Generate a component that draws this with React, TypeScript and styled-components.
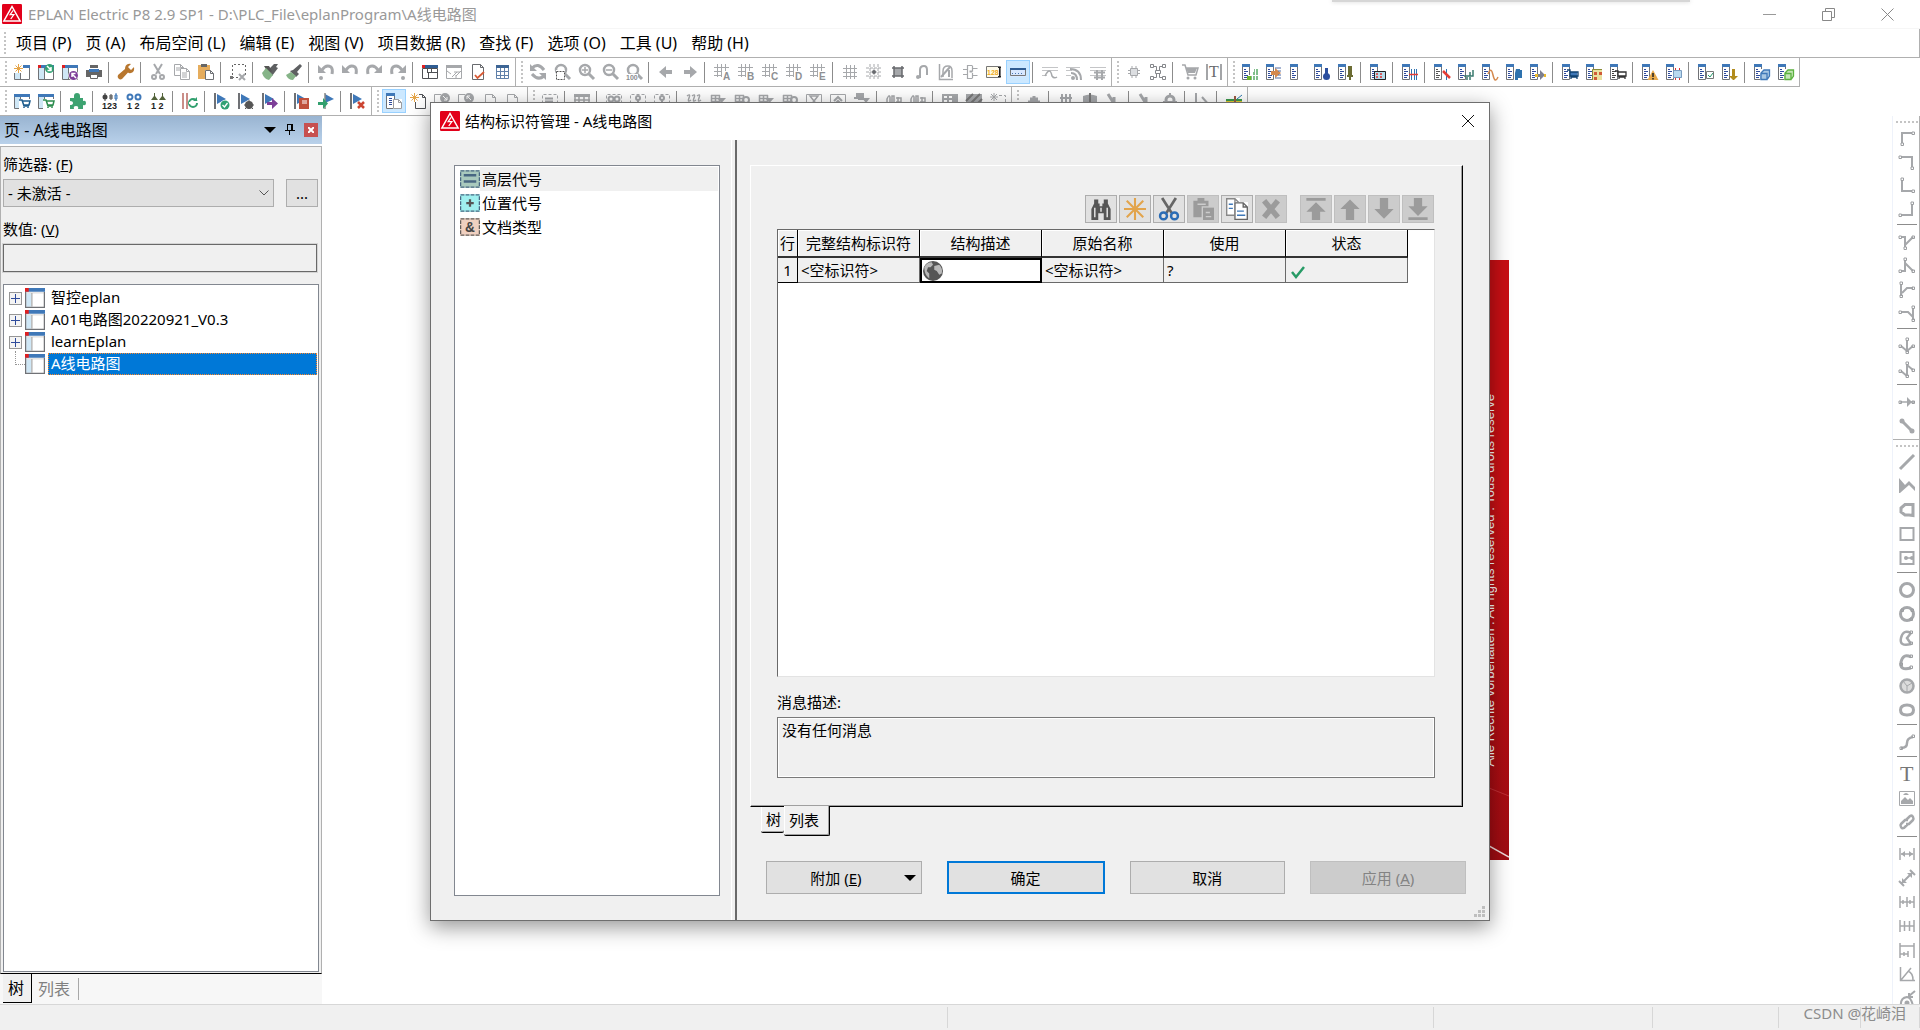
import React from "react";
import styled, { createGlobalStyle, css } from "styled-components";

/* ---------- icon drawing ---------- */

type Layer = { f?: string; s?: string; w?: number; dash?: string; d?: string; t?: string; x?: number; y?: number; z?: number; serif?: boolean };
const F = (f: string, d: string): Layer => ({ f, d });
const S = (s: string, d: string, w = 1, dash?: string): Layer => ({ s, d, w, dash });
const T = (t: string, f: string, x: number, y: number, z: number, serif = false): Layer => ({ t, f, x, y, z, serif });
const circle = (x: number, y: number, r: number) => `M${x - r} ${y}a${r} ${r} 0 1 0 ${2 * r} 0a${r} ${r} 0 1 0 ${-2 * r} 0z`;
const box = (x: number, y: number, w: number, h: number) => `M${x} ${y}h${w}v${h}h${-w}z`;

const G = "#a6a8ab";
const B = "#3f78b8";
const K = "#686a6e";
const N = "#2f4b9b";
const STAR = "#e5a548";

const win = [F("#fff", box(0, 1, 16, 15)), F("#cfe7f6", box(1, 4, 5, 11)), S("#707276", "M.5 4v11.5h15V4M6.5 4v11"), F(B, box(0, 1, 16, 3))];
const star = [F("#fff", box(0, 0, 9, 9)), S(STAR, "M4.5 0v9M0 4.5h9M1.5 1.5l6 6M7.5 1.5l-6 6")];
const page = (x: number, y: number, c: string, w = 9, h = 12) => [F("#fff", box(x, y, w, h)), S(c, `M${x + 0.5} ${y + 0.5}h${w - 4}l3 3v${h - 4}h${-(w - 1)}zM${x + w - 3.5} ${y + 0.5}v3h3`)];
const grid = [S(G, "M4.500 1v14M8.500 1v14M12.500 1v14M1 4.500h14M1 8.500h14M1 12.500h14")];
const snapGrid = (letter: string) => [S(G, "M3.500 0v13M7.500 0v13M11.500 0v8M0 3.500h15M0 7.500h15M0 11.500h8", 1), F("#fff", box(8, 7, 8, 9)), T(letter, "#8e9093", 9, 16, 10)];
const nav = (c = N) => [F("#fff", box(0, 0, 8, 16)), S("#707276", "M.5 3v12.500h7V3"), F(B, box(0, 0, 8, 3)), S(c, "M2 5.500h2M2 7.500h4M2 9.500h2M2 11.500h4M2 13.500h3")];
const flag = [S("#6f7175", "M1 0v16", 2), F(B, "M3 1l9 5-9 5z")];
const node = (...p: [number, number][]) => p.map(([x, y]) => S("#9c9ea1", box(x - 1, y - 1, 2.5, 2.5)));
const undo = (flip: boolean, dot: boolean) => [
  S(G, flip ? "M12 6Q8 0 3 3Q1 5 2 10" : "M4 6Q8 0 13 3Q15 5 14 10", 3),
  F(G, flip ? "M16 1v8H8z" : "M0 1v8h8z"),
  ...(dot ? [F(G, circle(flip ? 13 : 3, 14, 2))] : []),
];
const up = [F("#9b9b9b", "M8 1l7 7h-4v8H5V8H1z")];
const lens = [S(G, circle(7, 6, 5), 2.5), S(G, "M11 10l5 5", 3)];
const dashed = [S(G, "M.5 15.500V1.500h15v14", 1, "3 2")];

const icons: Record<string, Layer[]> = {
  "new project": [...win, ...star],
  "open project": [...win, F("#e02020", box(0, 1, 3, 3)), F("#31a073", circle(11.5, 4.5, 4.5)), S("#fff", "M9 2l4 4M13 3v3.500H9.500", 1.500)],
  "close project": [...win, F("#e02020", box(0, 1, 3, 3)), F("#fff", circle(11.500, 11.500, 5.200)), F("#7d3f98", circle(11.500, 11.500, 4.500)), S("#fff", "M14 14l-4-4M10 13v-3.500h3.500", 1.500)],
  print: [F("#666", box(4, 1, 8, 3)), F("#666", "M0 6h16v7H0z"), F(B, box(3, 5, 10, 3)), F("#fff", box(4, 11, 8, 3)), S("#666", "M4.500 10v4.500h7V10")],
  settings: [F("#b8772f", "M10 0q2-.5 3 0l-3 3 3 3 3-3q1 5-3 6-2 .5-3-.5L4 15q-2 1-3.500-.5T0 11l7-6q0-4 3-5z")],
  cut: [S(G, "M4 0l6 10M12 0L6 10", 2), S(G, circle(4, 13, 2), 2), S(G, circle(12, 13, 2), 2)],
  copy: [...page(0, 0, G, 10, 12), S(G, "M2 4h4M2 6h4"), ...page(6, 4, G, 10, 12), S(G, "M8 9h5M8 11h5M8 13h5")],
  paste: [F("#e6ad5d", box(0, 1, 12, 14)), F("#666", box(3, 0, 6, 3)), ...page(7, 6, "#6e7175", 9, 10)],
  "clear area": [S("#666", "M2.500 11V.5h13V11M2 13.500h6", 1, "2 2"), F("#777", box(0, 12, 3, 3)), S(G, "M9 10l6 6M15 10l-6 6", 2)],
  "copy format": [F("#5e6062", "M6 6L12 0l4 0-2 3 2 1-6 8z"), F("#555", "M2 2l5 0 3 5-3 3z"), F("#86b488", "M0 9l4-5 7 7-4 5q-5-1-7-7z")],
  "assign format": [F("#5e6062", "M7 6l7-6 2 2-5 6 2 2-3 3-6-6z"), F("#86b488", "M0 11l5-3 5 4-3 4q-5 0-7-5z")],
  undo: undo(false, true), "undo list": undo(false, false), redo: undo(true, false), "redo list": undo(true, true),
  "page navigator": [F("#fff", box(0, 1, 16, 14)), S("#4e5054", "M.5 4.500h15v10H.5zM6.500 4v11M6 8.500h10"), F("#2f5c92", box(0, 1, 16, 3)), F("#e02020", box(0, 1, 3, 3)), F("#4e5054", box(5, 4, 5, 5)), F("#fff", box(6, 5, 3, 3))],
  "graphic preview": [S(G, "M.5 4v10.500h15V4M1 7l4 3M6 13l5-5M15 7l-5 5M8 8h6M10 11v3"), F(G, box(0, 1, 16, 3))],
  "check page": [...page(2, 0, "#686a6e", 12, 16), S("#d85a35", "M5 11l2.500 3L14 8", 1.800)],
  "table view": [F("#fff", box(2, 1, 13, 15)), S("#5f80aa", "M2.500 4v10.500h12V4M6.500 4v11M10.500 4v11M2 7.500h13M2 11.500h13"), F("#3d6595", box(2, 1, 13, 3))],
  refresh: [S(G, "M14 6Q8-2 2 4M2 10q6 7 12 2", 3), F(G, "M0 0v7h7zM16 16V9H9z")],
  "zoom window": [...lens, F("#fff", box(2, 6, 9, 10)), S("#555", box(2.500, 7.500, 8, 8), 1, "2 1")],
  "zoom in": [...lens, S(G, "M4 6h6M7 3v6", 1.500)], "zoom out": [...lens, S(G, "M4 6h6", 1.500)],
  "zoom all": [...lens, F("#fff", box(0, 10, 12, 6)), T("100", "#8a8c8f", 0, 16, 7)],
  back: [F(G, "M1 8l7-6v4h6v4H8v4z")], forward: [F(G, "M15 8L8 2v4H2v4h6v4z")],
  "grid A": snapGrid("A"), "grid B": snapGrid("B"), "grid C": snapGrid("C"), "grid D": snapGrid("D"), "grid E": snapGrid("E"),
  "grid display": grid, "snap to grid": [S(G, "M4 0v16M8 0v16M12 0v16M0 4h16M0 8h16M0 12h16", 1, "3 1"), F(K, circle(8, 8, 2))],
  "align to grid": [F(G, box(4, 4, 8, 8)), S(K, "M4 2v12M12 2v12M2 4h12M2 12h12", 1.500)],
  "object snap": [S(G, "M4 13h2V6q0-4 4-4 3 0 3 4v5", 2), F(G, circle(4, 13, 2))],
  "design mode": [S(G, "M1.500 0v15.500H15M5 13V7q0-5 5-5 4 0 4 5v7", 1.500), S(G, "M3 13L12 3M11 13V6", 2)],
  "logic snap": [S(G, "M5.500 1.500h5M5.500 1v5M1 5.500h4.500M5.500 9v5.500h5M1 10.500h4.500M5.500 6v4M10.500 4.500h5M10.500 11.500h5M10.500 2v5h-3M10.500 9v5M7.500 8h3", 1.200)],
  "placeholder text": [F("#fffbea", box(0, 2, 15, 12)), S("#777", box(.5, 2.500, 14, 11)), T("128", "#efac1d", 1, 11, 7), S("#222", "M13.500 3v10M12 3.500h3M12 12.500h3")],
  ruler: [F("#d9e8ff", box(0, 5, 16, 8)), S("#777", box(.5, 5.500, 15, 6)), F("#2f5c92", box(0, 4, 16, 2)), S("#4b76b0", "M2 9.500h12", 1, "1 2")],
  "line wave": [S("#c4c5c7", "M0 3.500h16M0 6.500h16M0 11.500h5"), S(G, "M3 12q5-10 7 0 2 3 5 1", 1.500)],
  "line arc": [S("#c4c5c7", "M0 3.500h14M0 6.500h6M0 11.500h5"), S(G, "M4 5q11 0 11 11M5 9q6 0 6 7", 2), F(G, circle(7, 14, 2))],
  "line hatch": [S("#c4c5c7", "M0 3.500h16M0 6.500h16M0 11.500h16"), S(G, "M7 6v10M12 6v10M4 8.500h11M4 13.500h11", 2)],
  box: [F("#dcdee1", box(4, 5, 8, 6)), S(G, "M4.500 4.500h7v7h-7zM2 6.500h2M2 9.500h2M12 6.500h2M12 9.500h2M6 2v2M10 2v2M6 12v2M10 12v2")],
  structure: [S("#85878b", "M.5.5h3v3h-3zM12.500.5h3v3h-3zM.5 12.500h3v3h-3zM12.500 12.500h3v3h-3zM5.500 6.500h5v3h-5zM3.500 2.500h3v4M12.500 2.500h-3v4M3.500 13.500h3v-4M12.500 13.500h-3v-4")],
  cart: [S(G, "M0 1h3l3 10h8l2-7H4", 1.500), F(G, "M4 4h11l-2 5H6z"), F(G, circle(6, 14, 1.500)), F(G, circle(13, 14, 1.500))],
  "text marker": [S(K, "M1 0v16M15 0v16", 1.200), T("T", K, 3, 13, 16, true)],
  "nav terminals": [...nav(), F("#80bf8c", "M12 5h4v11H6v-5h4V8h2z"), S("#fff", "M6 11.500h10M10.500 8v8M13.500 5v11"), F("#6fb52e", box(5, 12, 4, 4))],
  "nav plugs": [...nav(), F("#d4894e", "M5 7h4V4l6 5-6 5v-3H5z"), S("#506da6", "M9 4h6M12 7h3M12 11h3M9 14h6")],
  "nav plain": nav(),
  "nav cable": [...nav(), F("#2c4f9e", circle(12.500, 12.500, 3.500)), F("#2c4f9e", box(11, 4, 3, 7))],
  "nav pen": [...nav(), F("#6b6c33", "M10 2h4v9h1v2h-2v3h-2v-3H9v-2h1z")],
  "nav plc": [...nav(), F("#b8dcea", box(5, 7, 11, 9)), S("#222", box(4.500, 7.500, 11, 8)), S("#d33", "M6 10h8M6 13h8", 1.500, "2 2")],
  "nav bus": [...nav(), S("#2e72b2", "M9.500 5v11M12.500 5v11M14.500 5v11"), S("#e43c36", "M7 10.500h9", 1.500)],
  "nav connection": [...nav("#555"), S("#2e72b2", "M12.500 5v11"), S("#e43c36", "M9 7l7 7", 2.500)],
  "nav wires": [...nav(), S("#39796e", "M6 12h9V6M12 8v4M9 13v3M12 13v3", 1.500)],
  "nav signal": [...nav(), S("#d4894e", "M6 10q3-8 5 1t5 2", 1.500)],
  "nav device": [...nav(), F("#2e72ae", "M10 5h4v1h2v8h-4v2H9V9z")],
  "nav arrow": [...nav(), F("#7d8090", "M7 10h3V6l5 5-5 5v-3H7z"), F("#e9b82e", box(5, 10, 3, 3)), F("#e9b82e", box(14, 10, 2, 3))],
  "nav blue cart": [...nav(), F("#3f78b8", box(8, 8, 7, 4)), S("#114271", "M5 6h3v6h8V8H8M9 15v-2h6v2", 1.300)],
  "nav cabinet": [...nav(), F("#e9e1a0", box(6, 5, 10, 11)), F("#d05b37", "M8 8h3v3H8zM13 8h3v3h-3zM8 13h3v3H8z"), S("#8a8a35", "M6.500 16V5.500H16")],
  "nav black cart": [...nav("#444"), F("#fff", box(8, 8, 8, 4)), S("#333", "M5 7h3v5h8V8H8M9 15v-2h6v2", 1.300)],
  "nav warning": [...nav(), F("#e8aa4c", "M11 6l5.500 10H5.500z"), S("#222", "M11 9v4M11 14v1.500", 1.500)],
  "nav chip": [...nav(), F("#b9d9ef", box(7, 7, 9, 7)), S("#7a9cc0", box(7.500, 6.500, 8, 7)), S("#d33", "M9.500 4v2M13.500 4v2M9.500 14v2M13.500 14v2")],
  "nav check": [...nav(), F("#fff", box(8, 7, 8, 9)), S("#777", box(8.500, 7.500, 7, 7)), S("#269a6b", "M10 11l2 2 3-4")],
  "nav anchor": [...nav(), F("#b28c1d", "M10 5h3v7h3l-4 4h-1l-4-4h3z")],
  "nav blue cube": [...nav(), F("#fff", box(6, 5, 10, 11)), F("#a9c8e4", "M6 10l4-4h6v6l-3 4H6z"), S("#3f78b8", "M7 9.500h6v6H7zM7 9l3-3h5.500v6l-2 3", 1.300)],
  "nav green cube": [...nav(), F("#fff", box(6, 5, 10, 11)), F("#c4e5b6", "M6 10l4-4h6v6l-3 4H6z"), S("#5bb13f", "M7 9.500h6v6H7zM7 9l3-3h5.500v6l-2 3", 1.300)],
  "device cart": [...win, F("#fff", box(5, 6, 11, 10)), S("#1e5d8e", "M5 7h3l2 6h5M8 8h8l-1 4H9M10 15v-1M14 15v-1", 1.500)],
  "part cart": [...win, F("#fff", box(5, 6, 11, 10)), S("#2d8c4e", "M5 7h3l2 6h5M8 8h8l-1 4H9M10 15v-1M14 15v-1", 1.500)],
  addon: [F("#3da371", "M0 5h4V3q0-3 3-3t3 3v2h3v3q3-1 3 2t-3 2v4H8q1-3-2-3t-2 3H0v-4q3 0 3-2t-3-2z")],
  "number devices": [F("#444", circle(3, 4, 2.500)), S("#444", "M3 0v8M7 3h4M7 5h4M9 1v6"), S(B, "M14 0v8M13 2h2v4h-2z"), T("123", "#222", 0, 16, 9)],
  "number cables": [S(B, circle(4, 4, 2.500), 2), S(B, circle(12, 4, 2.500), 2), T("1 2", "#222", 1, 16, 9)],
  "number terminals": [F("#53633a", "M4 0h1v3l3 4H1l3-4zM12 0h1v3l3 4H9l3-4z"), T("1 2", "#222", 1, 16, 9)],
  "update connections": [S("#b96a62", "M1 0v16M5 0v16", 1.500), S("#32a06f", circle(11, 10, 4), 2), F("#fff", box(7, 9, 3, 2)), F("#fff", box(12, 8, 4, 2)), F("#32a06f", "M15 4v4h-4z")],
  "run check": [...flag, F("#fff", circle(11, 12, 5)), F("#31a073", circle(11, 12, 4.500)), S("#fff", "M8.500 12l2 2 3-4", 1.300)],
  "check settings": [...flag, F("#555", circle(11, 12, 4)), S("#555", "M11 7v9M6 12h10M8 9l7 7M14 9l-7 7")],
  "check next": [...flag, F("#7d3f98", "M5 9h5V5l6 5.500-6 5.500v-4H5z")],
  "message book": [...flag, F("#c0503c", box(5, 5, 10, 11)), S("#fff", "M8 8h5M8 10h5")],
  "message go": [F(B, "M7 1l9 5-9 4z"), S("#888", "M7 0v16", 1.500), F("#32a06f", "M0 9h5V5l5 5.500L5 16v-4H0z")],
  "delete messages": [...flag, S("#cc4531", "M8 9l6 6M14 9l-6 6", 2.500)],
  "page list": [F("#fff", box(0, 0, 9, 16)), S("#707276", "M.5 3v12.500h8V3"), F(B, box(0, 0, 9, 3)), S(N, "M3 5.500h3M3 7.500h3M3 9.500h3M3 11.500h3", 1), ...page(7, 6, "#9a9ca0", 9, 10)],
  "new page": [...page(5, 1, "#505256", 11, 15), ...star],
  "page down": [S(G, "M.5 16V1.500H7"), F(G, circle(11, 5, 5)), S("#fff", "M9 3l4 4M13 4v3h-3")],
  "page up": [S(G, "M.5 16V1.500H7"), F(G, circle(11, 5, 5)), S("#fff", "M13 7L9 3M9 6V3h3")],
  "page copy": page(3, 1, G, 11, 14), "page move": page(1, 1, G, 11, 14),
  "dash list": [...dashed, S(G, "M3 5.500h8M3 8.500h8", 2)], "dash table": [F(G, box(0, 1, 16, 3)), S(G, "M1 2v12M5 2v12M10 2v12M15 2v12M0 7h16M0 11h16", 1.500)],
  "dash circles": [...dashed, S(G, circle(5, 6, 2.500), 2), S(G, circle(11, 6, 2.500), 2)],
  "dash person": [...dashed, S(G, circle(8, 5, 2), 2), S(G, "M8 7v3l-4 5M8 10l4 5", 2)],
  waves: [S(G, "M1 3q4-3 2 2t2 2M6 3q4-3 2 2t2 2M11 3q4-3 2 2t2 2", 1.500)],
  "table filter": [S(G, "M1 2.500h9M1 5.500h9M1 8.500h9M1.500 2v8M5.500 2v8M9.500 2v8", 1.500), F(G, "M7 5h9l-4.500 5z")],
  "table circle": [S(G, "M1 2.500h9M1 5.500h9M1 8.500h9M1.500 2v8M5.500 2v8M9.500 2v8", 1.500), S(G, circle(12, 7, 3), 2)],
  hourglass: [S(G, box(.5, 1.500, 15, 14)), S(G, "M4 3h8L4 13h8z", 1.500)],
  "box up": [S(G, box(.5, 1.500, 15, 14)), S(G, "M4 8l4-4 4 4M4 12l4-4 4 4", 2)],
  "signal filter": [S(G, "M0 5h3V1h2v5h2V1h2v5h4", 2), F(G, "M8 5h8l-4 5z")],
  hand: [S(G, "M1 16V6q2-5 3-2v12M6 16V3h2v13M12 4v12M10 5h5v4h-5", 1.500)],
  bars: [F(G, box(0, 1, 16, 10)), F("#fff", "M2 3h3v2H2zM7 3h3v2H7zM2 7h3v2H2zM7 7h3v2H7z")],
  hatched: [F(G, box(0, 1, 16, 14)), S("#777", "M0 8l7-7M0 15L14 1M7 15l9-9", 2)],
  "star dash": [S(G, "M4 0v8M0 4h8M1 1l6 6M7 1L1 7"), S(G, "M9 2.500h6.500V16", 1, "3 2")],
  bell: [S(G, "M8 3v6M4 6h8M2 9h12", 3)],
  pipes: [S(G, "M4 1v15M8 1v15M12 1v15M2 5h12", 2)],
  cylinder: [F(G, "M1 3q7-3 14 0v6q-7 3-14 0z"), S("#777", "M8 0v12", 2)],
  slash: [S(G, "M2 1l5 8M8 4v10", 3)], gear: [S(G, circle(8, 7, 4), 3), S(G, "M8 0v4M1 9h14", 2)],
  cursor: [S(G, "M2 0v14l4-4 5 6M8 4l7 8", 2)],
  rainbow: [F("#3d9b4d", box(0, 6, 16, 2)), F("#e7ce31", box(0, 8, 16, 2)), F("#b3492d", box(0, 10, 16, 2)), S("#9c5c44", "M9 3v10", 2), S("#2c7bb1", "M11 6l5-4")],

  "corner rd": [S(G, "M3 13V3H13", 2), ...node([14, 3], [3, 14])],
  "corner ld": [S(G, "M3 3h10V13", 2), ...node([1, 3], [13, 14])],
  "corner ru": [S(G, "M3 2v11H13", 2), ...node([3, 1], [14, 13])],
  "corner lu": [S(G, "M13 2v11H3", 2), ...node([13, 1], [1, 13])],
  "t right": [S(G, "M2 3h4V13M6 11l8-8", 2), ...node([1, 3], [14, 3], [6, 14])],
  "t left": [S(G, "M6 2v11H2M6 5l8 8", 2), ...node([6, 1], [1, 13], [14, 13])],
  "t down": [S(G, "M2 2v12M3 11l5-5h6", 2), ...node([2, 1], [2, 14], [14, 6])],
  "t up": [S(G, "M14 2v12M14 11L9 6H2", 2), ...node([14, 1], [14, 14], [1, 6])],
  "cross down": [S(G, "M8 2v12M2 8l6 5 6-5", 2), ...node([8, 1], [1, 8], [14, 8], [8, 14])],
  "cross up": [S(G, "M8 2v12M2 9l6 5M8 3l6 5", 2), ...node([8, 1], [1, 9], [14, 8], [8, 14])],
  jumper: [S(G, "M1 8h14", 1.500), F(G, "M8 3l5 5-5 5z"), ...node([1, 8], [14, 8])],
  "break point": [S(G, "M3 3l10 10", 3), F(G, circle(3, 3, 2.500)), F(G, circle(13, 13, 2.500))],
  line: [S(G, "M1 15L15 1", 3)],
  polyline: [F(G, "M0 0l6 7 4-4 6 6v4l-6-6-9 8H0z")],
  polygon: [S(G, "M14 2.500v11L10 13H6L2 10V6l4-3.500h4z", 3)],
  rectangle: [S(G, box(1.500, 2, 13, 12), 2)],
  "rectangle centre": [S(G, box(1.500, 2, 13, 12), 2), S(G, "M7 8h6", 1.500), F(G, circle(7, 8, 2)), F(G, circle(13, 8, 2))],
  "circle": [S(G, circle(8, 8, 6.500), 3)],
  "circle points": [S(G, circle(8, 8, 6.500), 3), ...node([3, 4], [13, 4], [12, 13])],
  "arc centre": [S(G, "M12 3Q4-1 2 8t10 6M12 3L8 8l4 6", 2.500), ...node([12, 2], [12, 13])],
  "arc points": [S(G, "M12 3Q4-1 2 8t10 6", 3), ...node([12, 2], [2, 10], [12, 13])],
  sector: [F("#dcdcdc", circle(8, 8, 7)), S(G, circle(8, 8, 6.500), 2.500), S(G, "M8 8L4 3M8 8v6M8 8l5-3")],
  ellipse: [S(G, "M1.500 8q0-5 6.500-5t6.500 5-6.500 5-6.500-5z", 3)],
  spline: [S(G, "M2 14q6 0 6-5t6-6", 2.500), ...node([2, 14], [14, 2])],
  text: [T("T", "#777", 1, 15, 22, true)],
  picture: [S(G, box(.5, 1.500, 15, 14)), F(G, "M2 14v-3l4-4 3 3 2-2 3 3v3zM4 5q3-4 6 0z")],
  hyperlink: [S(G, "M7 6l4-4q2-1 3 1t0 3l-4 4H7M9 10l-4 4q-2 1-3-1t0-3l4-4h3", 2.500)],
  "dim linear": [S(G, "M1 2v12M15 2v12M2 8h12", 1.500), F(G, "M2 8l4-3v6zM14 8l-4-3v6z")],
  "dim aligned": [S(G, "M3 13L13 3M0 11l5 5M11 0l5 5", 2), F(G, "M3 13V8l5 5zM13 3v5L8 3z")],
  "dim chain": [S(G, "M1 2v12M8 3v10M15 2v12M1 8h14M4 6v4M11 6v4", 1.500)],
  "dim base": [S(G, "M1 2v12M5.500 3v10M10.500 3v10M15 2v12M1 8h14", 1.500)],
  "dim step": [S(G, "M1 1v15M15 1v15M1 4h14M1 12h8M9 9v6M5 10v4", 1.500)],
  "dim angle": [S(G, "M1.500 1v13.500H16M2 14L12 2M9 5q5 2 5 9", 1.500)],
  "dim radius": [S(G, "M2 16q-1-8 6-9 4 0 6 9M16 1l-6 5M10 3v4h4", 2), F(G, circle(8, 13, 2.500))],

  find: [F("#555", "M3 1h3v3h1v2h2V4h1V1h3v3l2 4v8h-5v-5H6v5H1V8l2-4z"), S("#eee", "M3.500 7v7M12.500 7v7M8 7v3")],
  create: [S("#e2a44c", "M8 0v16M0 8h16M2 2l12 12M14 2L2 14", 1.500)],
  "cut entry": [S("#666", "M3 0l7 11M13 0L6 11", 2), S("#2a6cb5", circle(4, 13, 2.500), 1.800), S("#2a6cb5", circle(12, 13, 2.500), 1.800)],
  "paste entry": [F("#9b9b9b", "M1 2h3V0h5v2h3v4H7v8H1z"), F("#9b9b9b", box(8, 7, 8, 9)), F("#ccc", "M4 4h6v1H4zM10 10h3v1h-3zM10 13h4v1h-4z")],
  "copy entry": [...page(0, 0, "#888", 10, 13), S(B, "M2 4.500h3M2 7.500h3"), ...page(6, 3, "#666", 10, 13), S(B, "M8 9.500h5M8 12.500h6")],
  "delete entry": [S("#9b9b9b", "M3 2l10 12M13 2L3 14", 4)],
  "move to top": [F("#9b9b9b", "M1 0h14v2H1zM8 3l7 7h-4v6H5v-6H1z")],
  "move up": up,
  "move down": [F("#9b9b9b", "M8 15L1 8h4V0h6v8h4z")],
  "move to bottom": [F("#9b9b9b", "M1 14h14v2H1zM8 13L1 6h4V0h6v6h4z")],

  project: [F("#fff", box(0, 0, 16, 16)), F("#cfe7f6", box(1, 4, 4, 11)), F("#e4e4e4", box(1, 3, 14, 1.500)), S("#707276", "M.5 3v12.500h15V3"), S("#aaa", "M5.500 4v11"), F(B, box(0, 0, 16, 3)), F("#e02020", box(0, 0, 3, 3))],
  plant: [F("#a9c9bd", box(0, 1, 16, 14)), S("#496782", box(.5, 1.500, 15, 13), 1, "3 1"), F("#496782", "M3 4h10v2H3zM3 9h10v2H3z")],
  location: [F("#9ff0ef", box(0, 1, 16, 14)), S("#496782", box(.5, 1.500, 15, 13), 1, "3 1"), S("#555", "M5 8h6M8 5v6", 1.800)],
  document: [F("#f0d0c0", box(0, 1, 16, 14)), S("#625d5a", box(.5, 1.500, 15, 13), 1, "3 1"), T("&", "#444", 4, 12, 11)],
  logo: [F("#e2001a", "M1 0h14q1 0 1 1v14q0 1-1 1H1q-1 0-1-1V1q0-1 1-1z"), S("#fff", "M8 2L1.500 13.500h13z", 1.200), S("#fff", "M9 5L6.500 8.500h3L7 12", 1)],
  globe: [F("#555", circle(8, 8, 8)), F("#b8b8b8", "M1 5q2-4 6-4l1 2-2 2H4L3 8l2 2v4Q1 11 1 5zM9 4l4-1q3 3 2 7l-2 1-2-3-2-1z")],
  ok: [S("#279b66", "M1 8l4 5 8-10", 2.500)],
};

const Svg = styled.svg<{ $size: number }>`
  display: block;
  flex: none;
  width: ${(p) => p.$size}px;
  height: ${(p) => p.$size}px;
  overflow: visible;
`;

function Icon({ name, size = 16 }: { name: string; size?: number }) {
  return (
    <Svg viewBox="0 0 16 16" $size={size} aria-hidden="true">
      {(icons[name] ?? []).map((l, i) =>
        l.t ? (
          <text key={i} x={l.x} y={l.y} fontSize={l.z} fill={l.f} fontWeight={l.serif ? 400 : 700} fontFamily={l.serif ? '"Liberation Serif", serif' : '"Liberation Sans", sans-serif'}>{l.t}</text>
        ) : (
          <path key={i} d={l.d} fill={l.f ?? "none"} stroke={l.s} strokeWidth={l.w} strokeDasharray={l.dash} />
        ),
      )}
    </Svg>
  );
}

/* ---------- content ---------- */

const menus = ["项目 (P)", "页 (A)", "布局空间 (L)", "编辑 (E)", "视图 (V)", "项目数据 (R)", "查找 (F)", "选项 (O)", "工具 (U)", "帮助 (H)"];

const upperBars = [
  "new project,open project,close project,print,|,settings,|,cut,copy,paste,|,clear area,|,copy format,assign format,|,undo,undo list,redo,redo list,|,page navigator,graphic preview,check page,table view",
  "refresh,zoom window,zoom in,zoom out,zoom all,|,back,forward,|,grid A,grid B,grid C,grid D,grid E,|,grid display,snap to grid,align to grid,object snap,design mode,logic snap,placeholder text,ruler*,|,line wave,line arc,line hatch",
  "box,structure,|,cart,text marker",
  "nav terminals,nav plugs,nav plain,nav cable,nav pen,|,nav plc,|,nav bus,|,nav connection,nav wires,nav signal,nav device,nav arrow,|,nav blue cart,nav cabinet,nav black cart,|,nav warning,nav chip,|,nav check,nav anchor,|,nav blue cube,nav green cube",
];
const lowerBars = [
  "device cart,part cart,|,addon,|,number devices,number cables,number terminals,|,update connections,|,run check,check settings,check next,|,message book,message go,|,delete messages",
  "page list*,new page,page down,page up,page copy,page move",
  "dash list,|,dash table,|,dash circles,dash person,dash person,|,waves,table filter,table circle,table filter,table circle,hourglass,box up,signal filter,|,hand,hand,|,bars,hatched,star dash",
  "bell,|,pipes,cylinder,slash,|,slash,gear,|,cursor,|,rainbow",
];
const sideBars = [
  "corner rd,corner ld,corner ru,corner lu,|,t right,t left,t down,t up,|,cross down,cross up,|,jumper,break point",
  "line,polyline,polygon,rectangle,rectangle centre,|,circle,circle points,arc centre,arc points,sector,ellipse,|,spline,|,text,picture,hyperlink,|,dim linear,dim aligned,dim chain,dim base,dim step,dim angle,dim radius",
];
const projects = [
  { name: "智控eplan" },
  { name: "A01电路图20220921_V0.3" },
  { name: "learnEplan" },
  { name: "A线电路图", selected: true },
];
const identifiers = [
  { icon: "plant", name: "高层代号", selected: true },
  { icon: "location", name: "位置代号" },
  { icon: "document", name: "文档类型" },
];
const entryTools = [
  [["find"], ["create"], ["cut entry"], ["paste entry", "off"], ["copy entry"], ["delete entry", "off"]],
  [["move to top", "off"], ["move up", "off"], ["move down", "off"], ["move to bottom", "off"]],
];

/* ---------- styles ---------- */

const Global = createGlobalStyle`
  * { box-sizing: border-box; }
  body { margin: 0; background: #fff; }
  body, button, input, select, textarea {
    font-family: "Noto Sans", "Noto Sans CJK SC", sans-serif;
    font-size: 15px;
    color: #000;
  }
  button { padding: 0; }
`;

const Window = styled.div`
  position: relative;
  display: flex;
  flex-direction: column;
  height: 100vh;
  overflow: hidden;
  line-height: 20px;
`;

const TitleBar = styled.header`
  display: flex;
  align-items: center;
  flex: none;
  height: 29px;
  padding: 0 26px 0 2px;
  gap: 6px;
  color: #999;
  border-bottom: 1px solid #f6f6f6;
`;
const TitleText = styled.h1`
  flex: 1;
  margin: 0;
  font-size: 15px;
  font-weight: 400;
`;
const WindowButtons = styled.div`
  display: flex;
  gap: 46px;
`;
const PlainButton = styled.button`
  display: flex;
  border: 0;
  background: none;
`;
const PeekingWindow = styled.div`
  position: absolute;
  top: 0;
  right: 230px;
  width: 358px;
  height: 2px;
  background: #d6d6d6;
  box-shadow: 0 0 4px #ccc;
`;

const MenuBar = styled.nav`
  display: flex;
  align-items: center;
  flex: none;
  height: 29px;
  padding-left: 4px;
  border-right: 1px solid #b0b0b0;
  border-bottom: 1px solid #b0b0b0;
`;
const Grip = styled.span<{ $vertical?: boolean }>`
  flex: none;
  ${(p) =>
    p.$vertical
      ? css`
          width: 22px;
          height: 2px;
          margin: 5px 0 3px;
          background: repeating-linear-gradient(90deg, #c4c4c4 0 2px, transparent 2px 4px);
        `
      : css`
          width: 2px;
          height: 22px;
          margin: 0 3px 0 5px;
          background: repeating-linear-gradient(#c4c4c4 0 2px, transparent 2px 4px);
        `}
`;
const MenuGrip = styled(Grip)`
  margin: 0 3px 0 0;
`;
const MenuItem = styled.button`
  height: 28px;
  padding: 0 7px 2px;
  border: 0;
  background: none;
  font-size: 16px;
  white-space: nowrap;
`;

const BarRow = styled.div`
  display: flex;
  flex: none;
  height: 29px;
`;
const Bar = styled.div<{ $vertical?: boolean }>`
  display: flex;
  align-items: center;
  flex: none;
  border: 0 solid #b0b0b0;
  ${(p) =>
    p.$vertical
      ? css`
          flex-direction: column;
          width: 27px;
          padding-bottom: 1px;
          border-bottom-width: 1px;
        `
      : css`
          height: 29px;
          padding-right: 1px;
          border-right-width: 1px;
          border-bottom-width: 1px;
        `}
`;
const BarButton = styled.button<{ $active?: boolean }>`
  display: flex;
  align-items: center;
  justify-content: center;
  flex: none;
  width: 24px;
  height: 24px;
  border: 1px solid ${(p) => (p.$active ? "#99d1ff" : "transparent")};
  background: ${(p) => (p.$active ? "#cce8ff" : "none")};
`;
const BarRule = styled.span<{ $vertical?: boolean }>`
  flex: none;
  background: #8c8c8c;
  ${(p) =>
    p.$vertical
      ? css`
          width: 20px;
          height: 1px;
          margin: 2px 0 5px;
        `
      : css`
          width: 1px;
          height: 21px;
          margin: 0 5px 0 2px;
        `}
`;

const Workspace = styled.div`
  display: flex;
  flex: 1;
  min-height: 0;
`;
const Panel = styled.aside`
  display: flex;
  flex-direction: column;
  flex: none;
  width: 322px;
  background: #f7f7f7;
`;
const PanelHeader = styled.div`
  display: flex;
  align-items: center;
  flex: none;
  height: 30px;
  padding: 0 4px;
  gap: 9px;
  border-bottom: 2px solid #fff;
  background: linear-gradient(#99b4d1, #b9d1ea);
`;
const PanelTitle = styled.h2`
  flex: 1;
  margin: 0;
  font-size: 16px;
  font-weight: 400;
`;
const PanelClose = styled.button`
  display: flex;
  align-items: center;
  justify-content: center;
  width: 14px;
  height: 14px;
  border: 0;
  background: #c75050;
`;
const PanelBody = styled.div`
  display: flex;
  flex-direction: column;
  flex: 1;
  min-height: 0;
  padding: 7px 2px 1px;
  border: 1px solid #b0b0b0;
  border-bottom-color: #000;
  background: #f0f0f0;
`;
const FieldLabel = styled.label`
  display: block;
  height: 20px;
`;
const FilterRow = styled.div`
  display: flex;
  gap: 12px;
  margin: 5px 0 12px;
`;
const SelectWrap = styled.div`
  position: relative;
  flex: 1;
  svg {
    position: absolute;
    right: 5px;
    top: 10px;
    pointer-events: none;
  }
`;
const Select = styled.select`
  width: 100%;
  height: 28px;
  padding: 0 4px;
  border: 1px solid #adadad;
  border-radius: 0;
  background: #e1e1e1;
  appearance: none;
`;
const MoreButton = styled.button`
  width: 32px;
  height: 28px;
  margin-right: 1px;
  border: 1px solid #adadad;
  background: #e1e1e1;
`;
const ValueInput = styled.input`
  width: 314px;
  height: 28px;
  margin: 5px 0 12px;
  border: 1px solid #696969;
  background: #f0f0f0;
  outline: 1px solid #d4d4d4;
`;
const Tree = styled.ul`
  flex: 1;
  margin: 0;
  padding: 2px 1px;
  border: 1px solid #828790;
  background: #fff;
  list-style: none;
`;
const TreeRow = styled.li`
  display: flex;
  align-items: center;
  height: 22px;
  padding-left: 4px;
`;
const Expander = styled.span<{ $leaf?: boolean }>`
  flex: none;
  width: 13px;
  height: 13px;
  margin-right: 3px;
  border: 1px solid #969696;
  background: linear-gradient(#2f4b9b, #2f4b9b) center / 9px 1px no-repeat, linear-gradient(#2f4b9b, #2f4b9b) center / 1px 9px no-repeat, #f4f4f4;
  ${(p) =>
    p.$leaf &&
    css`
      height: 14px;
      width: 10px;
      margin: -12px 0 0 6px;
      border-width: 0 0 1px 1px;
      border-style: dotted;
      background: none;
    `}
`;
const TreeName = styled.span<{ $selected?: boolean }>`
  flex: 1;
  height: 22px;
  margin-left: 3px;
  padding-left: 2px;
  border: 1px dotted ${(p) => (p.$selected ? "#ff8728" : "transparent")};
  background: ${(p) => (p.$selected ? "#0078d7" : "none")};
  color: ${(p) => (p.$selected ? "#fff" : "#000")};
  line-height: 18px;
`;
const PanelTabs = styled.div`
  display: flex;
  flex: none;
  height: 30px;
  padding-left: 3px;
`;
const PanelTab = styled.button<{ $active?: boolean }>`
  height: 29px;
  padding: ${(p) => (p.$active ? "0 7px 2px 5px" : "0 8px 2px 6px")};
  border: 0 solid #000;
  border-width: ${(p) => (p.$active ? "0 1px 1px 0" : "0")};
  background: ${(p) => (p.$active ? "#f0f0f0" : "none")};
  color: ${(p) => (p.$active ? "#000" : "#808080")};
  font-size: 16px;
`;
const TabDivider = styled.span`
  width: 1px;
  height: 22px;
  margin-top: 4px;
  background: #a8a8a8;
`;

const Canvas = styled.main`
  display: flex;
  align-items: center;
  justify-content: center;
  flex: 1;
  min-width: 0;
`;
const Splash = styled.div`
  display: flex;
  align-items: flex-end;
  justify-content: flex-end;
  width: 804px;
  height: 600px;
  overflow: hidden;
  background: linear-gradient(to top, #a00c12, #c80f14 60%);
`;
const Copyright = styled.p`
  margin: 0 10px 93px 0;
  color: #fff;
  font: 13px/18px "Liberation Sans", sans-serif;
  writing-mode: vertical-rl;
  rotate: 180deg;
  white-space: nowrap;
`;
const Streak = styled.svg`
  display: block;
  width: 20px;
  height: 80px;
  margin-left: -20px;
`;
const SideRail = styled.div`
  flex: none;
  width: 28px;
  overflow: hidden;
  border-left: 1px solid #eef2fa;
  border-right: 1px solid #b0b0b0;
`;

const StatusBar = styled.footer`
  display: grid;
  grid-template-columns: 1fr 486px 219px 126px 82px 59px;
  flex: none;
  height: 26px;
  border-top: 1px solid #d7d7d7;
  background: #f0f0f0;
`;
const StatusCell = styled.span`
  margin: 2px 0;
  border-right: 1px solid #d7d7d7;
`;
const Watermark = styled.span`
  position: absolute;
  right: 14px;
  bottom: 7px;
  color: #8c8c8c;
`;

const Overlay = styled.div`
  position: absolute;
  inset: 0;
  display: flex;
  align-items: center;
  justify-content: center;
  padding-bottom: 7px;
`;
const Dialog = styled.section`
  display: flex;
  flex-direction: column;
  width: 1060px;
  height: 819px;
  border: 1px solid #6e6e6e;
  background: #f0f0f0;
  box-shadow: 0 6px 20px rgba(0, 0, 0, 0.42);
`;
const DialogTitle = styled.header`
  display: flex;
  align-items: center;
  flex: none;
  height: 37px;
  padding: 0 14px 1px 9px;
  gap: 5px;
  background: #fff;
`;
const DialogBody = styled.div`
  display: flex;
  flex: 1;
  min-height: 0;
`;
const IdentifierPane = styled.div`
  display: flex;
  flex: none;
  width: 306px;
  padding: 25px 11px 24px 23px;
  border-right: 2px solid #696969;
  box-shadow: inset -3px 0 #f0f0f0, inset -4px 0 #fff;
`;
const IdentifierList = styled.ul`
  flex: 1;
  margin: 0 4px 0 0;
  padding: 1px;
  border: 1px solid #828790;
  background: #fff;
  list-style: none;
`;
const Identifier = styled.li`
  display: flex;
  align-items: center;
  height: 24px;
  padding-left: 4px;
`;
const IdentifierName = styled.span<{ $selected?: boolean }>`
  flex: 1;
  padding: 2px;
  background: ${(p) => (p.$selected ? "#f0f0f0" : "none")};
`;
const ListPane = styled.div`
  display: flex;
  flex-direction: column;
  flex: 1;
  min-width: 0;
  padding: 25px 23px 7px 13px;
`;
const TabPage = styled.div`
  display: flex;
  flex-direction: column;
  flex: 1;
  min-height: 0;
  margin-right: 3px;
  padding: 29px 27px 28px 26px;
  border: 1px solid #fff;
  border-right-color: #000;
  border-bottom-color: #000;
  box-shadow: inset -1px -1px #a0a0a0;
`;
const EntryTools = styled.div`
  display: flex;
  justify-content: flex-end;
  gap: 13px;
  margin: 0 1px 6px 0;
`;
const EntryGroup = styled.div`
  display: flex;
  gap: 2px;
`;
const EntryButton = styled.button`
  display: flex;
  align-items: center;
  justify-content: center;
  width: 32px;
  height: 28px;
  border: 1px solid #adadad;
  background: #e1e1e1;
  &:disabled {
    border-color: #bfbfbf;
    background: #ccc;
  }
`;
const Sheet = styled.div`
  flex: 1;
  min-height: 0;
  border: 1px solid #696969;
  border-right-color: #e3e3e3;
  border-bottom-color: #e3e3e3;
  background: #fff;
`;
const Table = styled.table`
  table-layout: fixed;
  width: 630px;
  border-collapse: separate;
  border-spacing: 0;
`;
const HeadCell = styled.th<{ $width?: number }>`
  width: ${(p) => p.$width ?? 122}px;
  height: 28px;
  padding: 0;
  border-right: 1px solid #000;
  border-bottom: 2px solid #333;
  background: #f0f0f0;
  font-weight: 400;
  box-shadow: inset 1px 1px #fff;
`;
const Cell = styled.td<{ $editing?: boolean; $head?: boolean }>`
  height: 25px;
  padding: 0 3px;
  border: solid #696969;
  border-width: 0 1px 1px 0;
  background: #f0f0f0;
  ${(p) =>
    p.$editing &&
    css`
      padding: 0 1px;
      border: 2px solid #000;
      background: #fff;
    `}
  ${(p) =>
    p.$head &&
    css`
      border-color: #000;
      text-align: center;
    `}
`;
const StateCell = styled(Cell)`
  padding: 4px 0 0 5px;
`;
const MessageLabel = styled.label`
  display: block;
  height: 20px;
  margin: 15px 0 5px;
`;
const Message = styled.textarea`
  display: block;
  flex: none;
  width: 100%;
  height: 61px;
  padding: 2px 4px;
  border: 1px solid #7a7a7a;
  background: #f0f0f0;
  box-shadow: inset -1px -1px #fff, inset 1px 1px #fff;
  line-height: 20px;
  resize: none;
`;
const PageTabs = styled.div`
  display: flex;
  align-items: flex-start;
  height: 28px;
  padding-left: 11px;
`;
const PageTab = styled.button<{ $active?: boolean }>`
  height: ${(p) => (p.$active ? 30 : 26)}px;
  margin-top: ${(p) => (p.$active ? -1 : 0)}px;
  padding: ${(p) => (p.$active ? "0 10px 2px 5px" : "0 3px 2px 5px")};
  border: 0 solid #000;
  border-width: ${(p) => (p.$active ? "0 1px 1px 0" : "0 0 1px 0")};
  border-radius: 0 0 2px 2px;
  background: #f0f0f0;
  box-shadow: ${(p) => (p.$active ? "inset 1px 0 #fff, inset -1px -1px #a0a0a0" : "inset 1px 0 #fff, inset 0 -1px #a0a0a0")};
`;
const Actions = styled.div`
  display: flex;
  gap: 25px;
  margin: 26px 0 0 16px;
`;
const ActionButton = styled.button<{ $primary?: boolean }>`
  display: flex;
  align-items: center;
  flex: 1 1 0;
  height: 33px;
  padding: 0 5px;
  gap: 4px;
  border: ${(p) => (p.$primary ? "2px solid #0078d7" : "1px solid #adadad")};
  background: #e1e1e1;
  span {
    flex: 1;
  }
  &:disabled {
    border-color: #bfbfbf;
    background: #ccc;
    color: #838383;
  }
`;
const ResizeGrip = styled.svg`
  display: block;
  align-self: flex-end;
  width: 12px;
  height: 12px;
  margin: 12px -20px -5px 0;
`;

/* ---------- components ---------- */

function Tools({ items, vertical }: { items: string; vertical?: boolean }) {
  return (
    <Bar $vertical={vertical} role="toolbar">
      <Grip $vertical={vertical} />
      {items.split(",").map((item, i) => {
        if (item === "|") return <BarRule key={i} $vertical={vertical} />;
        const name = item.replace("*", "");
        return (
          <BarButton key={i} $active={name !== item} aria-label={name}>
            <Icon name={name} />
          </BarButton>
        );
      })}
    </Bar>
  );
}

function ProjectPanel() {
  return (
    <Panel>
      <PanelHeader>
        <PanelTitle>页 - A线电路图</PanelTitle>
        <PlainButton aria-label="panel menu">
          <svg width="12" height="8"><path d="M0 1h12L6 7z" /></svg>
        </PlainButton>
        <PlainButton aria-label="pin panel">
          <svg width="10" height="12"><path d="M2.500 0v6M2 .5h5M6.500 0v6M7.500 0v6M0 6.500h10M4.500 6v5" fill="none" stroke="#000" /></svg>
        </PlainButton>
        <PanelClose aria-label="close panel">
          <svg width="6" height="6"><path d="M0 0l6 6M6 0L0 6" stroke="#fff" strokeWidth="2" /></svg>
        </PanelClose>
      </PanelHeader>
      <PanelBody>
        <FieldLabel htmlFor="filter">筛选器: (<u>F</u>)</FieldLabel>
        <FilterRow>
          <SelectWrap>
            <Select id="filter"><option>- 未激活 -</option></Select>
            <svg width="10" height="8"><path d="M.5 1.500L5 6l4.500-4.500" fill="none" stroke="#555" /></svg>
          </SelectWrap>
          <MoreButton>...</MoreButton>
        </FilterRow>
        <FieldLabel htmlFor="value">数值: (<u>V</u>)</FieldLabel>
        <ValueInput id="value" />
        <Tree>
          {projects.map((p) => (
            <TreeRow key={p.name}>
              <Expander $leaf={p.selected} />
              <Icon name="project" size={20} />
              <TreeName $selected={p.selected}>{p.name}</TreeName>
            </TreeRow>
          ))}
        </Tree>
      </PanelBody>
      <PanelTabs>
        <PanelTab $active>树</PanelTab>
        <PanelTab>列表</PanelTab>
        <TabDivider />
      </PanelTabs>
    </Panel>
  );
}

function StructureDialog() {
  return (
    <Dialog role="dialog" aria-label="结构标识符管理">
      <DialogTitle>
        <Icon name="logo" size={20} />
        <TitleText as="h2">结构标识符管理 - A线电路图</TitleText>
        <PlainButton aria-label="close dialog">
          <svg width="14" height="14"><path d="M1 1l12 12M13 1L1 13" stroke="#111" /></svg>
        </PlainButton>
      </DialogTitle>
      <DialogBody>
        <IdentifierPane>
          <IdentifierList>
            {identifiers.map((i) => (
              <Identifier key={i.name}>
                <Icon name={i.icon} size={20} />
                <IdentifierName $selected={i.selected}>{i.name}</IdentifierName>
              </Identifier>
            ))}
          </IdentifierList>
        </IdentifierPane>
        <ListPane>
          <TabPage>
            <EntryTools>
              {entryTools.map((group, g) => (
                <EntryGroup key={g}>
                  {group.map(([name, off]) => (
                    <EntryButton key={name} aria-label={name} disabled={!!off}>
                      <Icon name={name} size={22} />
                    </EntryButton>
                  ))}
                </EntryGroup>
              ))}
            </EntryTools>
            <Sheet>
              <Table>
                <thead>
                  <tr>
                    <HeadCell $width={20}>行</HeadCell>
                    <HeadCell>完整结构标识符</HeadCell>
                    <HeadCell>结构描述</HeadCell>
                    <HeadCell>原始名称</HeadCell>
                    <HeadCell>使用</HeadCell>
                    <HeadCell>状态</HeadCell>
                  </tr>
                </thead>
                <tbody>
                  <tr>
                    <Cell $head>1</Cell>
                    <Cell>&lt;空标识符&gt;</Cell>
                    <Cell $editing><Icon name="globe" size={20} /></Cell>
                    <Cell>&lt;空标识符&gt;</Cell>
                    <Cell>?</Cell>
                    <StateCell><Icon name="ok" /></StateCell>
                  </tr>
                </tbody>
              </Table>
            </Sheet>
            <MessageLabel htmlFor="message">消息描述:</MessageLabel>
            <Message id="message" readOnly value="没有任何消息" />
          </TabPage>
          <PageTabs>
            <PageTab>树</PageTab>
            <PageTab $active>列表</PageTab>
          </PageTabs>
          <Actions>
            <ActionButton>
              <span>附加 (<u>E</u>)</span>
              <svg width="12" height="8"><path d="M0 1h12L6 7z" /></svg>
            </ActionButton>
            <ActionButton $primary><span>确定</span></ActionButton>
            <ActionButton><span>取消</span></ActionButton>
            <ActionButton disabled><span>应用 (<u>A</u>)</span></ActionButton>
          </Actions>
          <ResizeGrip viewBox="0 0 12 12">
            <path d="M8 0h3v3H8zM4 4h3v3H4zM8 4h3v3H8zM0 8h3v3H0zM4 8h3v3H4zM8 8h3v3H8z" fill="#bfbfbf" />
          </ResizeGrip>
        </ListPane>
      </DialogBody>
    </Dialog>
  );
}

export default function App() {
  return (
    <Window>
      <Global />
      <TitleBar>
        <Icon name="logo" size={20} />
        <TitleText>EPLAN Electric P8 2.9 SP1 - D:\PLC_File\eplanProgram\A线电路图</TitleText>
        <WindowButtons>
          <PlainButton aria-label="minimize"><svg width="13" height="13"><path d="M0 6.500h13" stroke="#999" /></svg></PlainButton>
          <PlainButton aria-label="restore"><svg width="13" height="13"><path d="M.5 3.500h9v9h-9zM3.500 3V.5h9v9H10" fill="none" stroke="#888" /></svg></PlainButton>
          <PlainButton aria-label="close"><svg width="13" height="13"><path d="M.5.5l12 12M12.500.5l-12 12" stroke="#888" /></svg></PlainButton>
        </WindowButtons>
      </TitleBar>
      <MenuBar>
        <MenuGrip />
        {menus.map((m) => <MenuItem key={m}>{m}</MenuItem>)}
      </MenuBar>
      <BarRow>{upperBars.map((b) => <Tools key={b} items={b} />)}</BarRow>
      <BarRow>{lowerBars.map((b) => <Tools key={b} items={b} />)}</BarRow>
      <Workspace>
        <ProjectPanel />
        <Canvas>
          <Splash>
            <Copyright>Alle Rechte vorbehalten . All rights reserved . Tous droits reserve</Copyright>
            <Streak viewBox="0 0 20 80">
              <path d="M0 66l20 11" stroke="#f0dada" strokeWidth="1.500" />
              <path d="M0 8l20 8" stroke="#c03036" />
            </Streak>
          </Splash>
        </Canvas>
        <SideRail>{sideBars.map((b) => <Tools key={b} items={b} vertical />)}</SideRail>
      </Workspace>
      <StatusBar>
        {[0, 1, 2, 3, 4, 5].map((n) => <StatusCell key={n} />)}
      </StatusBar>
      <PeekingWindow />
      <Overlay>
        <StructureDialog />
      </Overlay>
      <Watermark>CSDN @花崎泪</Watermark>
    </Window>
  );
}
